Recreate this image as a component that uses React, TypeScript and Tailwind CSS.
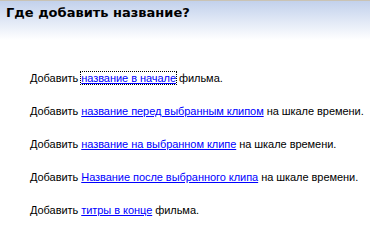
export default function App() {
  const rows: { pre: string; link: string; post: string; focus?: boolean }[] = [
    { pre: 'Добавить ', link: 'название в начале', post: ' фильма.', focus: true },
    { pre: 'Добавить ', link: 'название перед выбранным клипом', post: ' на шкале времени.' },
    { pre: 'Добавить ', link: 'название на выбранном клипе', post: ' на шкале времени.' },
    { pre: 'Добавить ', link: 'Название после выбранного клипа', post: ' на шкале времени.' },
    { pre: 'Добавить ', link: 'титры в конце', post: ' фильма.' },
  ];

  return (
    <div className="w-[370px] h-[239px] bg-white overflow-hidden font-['Liberation_Sans',Tahoma,sans-serif]">
      <div className="h-[40px] border-t border-[#c9c3b5] bg-gradient-to-b from-[#c2d1ec] to-white pl-[6px] pt-[4px]">
        <h1 className="font-['DejaVu_Sans',Tahoma,sans-serif] text-[13px] font-bold text-black leading-[16px]">
          Где добавить название?
        </h1>
      </div>
      <div className="pl-[30px] pt-[31px] flex flex-col gap-[19px]">
        {rows.map((r, i) => (
          <p key={i} className="text-[11px] leading-[14px] text-black whitespace-nowrap tracking-[-0.05px]">
            {r.pre}
            <a
              href="#"
              className={
                r.focus
                  ? 'text-[#0000ff] underline outline-1 outline-dotted outline-black'
                  : 'text-[#0000ff] underline'
              }
            >
              {r.link}
            </a>
            {r.post}
          </p>
        ))}
      </div>
    </div>
  );
}
